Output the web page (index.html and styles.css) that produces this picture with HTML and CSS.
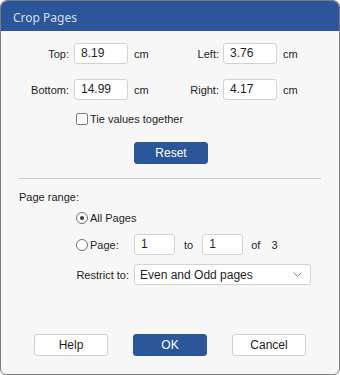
FILE: index.html
```html
<!DOCTYPE html>
<html>
<head>
<meta charset="utf-8">
<link rel="stylesheet" href="styles.css">
</head>
<body>
<div class="dialog">
  <div class="titlebar">Crop Pages</div>
  <div class="content">
    <div class="margins">
      <div class="lbl">Top:</div>
      <div class="field">8.19</div>
      <div class="unit">cm</div>
      <div class="lbl lbl2">Left:</div>
      <div class="field">3.76</div>
      <div class="unit">cm</div>
      <div class="lbl">Bottom:</div>
      <div class="field">14.99</div>
      <div class="unit">cm</div>
      <div class="lbl lbl2">Right:</div>
      <div class="field">4.17</div>
      <div class="unit">cm</div>
    </div>
    <div class="tie"><span class="check"></span><span>Tie values together</span></div>
    <div class="reset-row"><div class="btn primary">Reset</div></div>
    <div class="sep"></div>
    <div class="range-title">Page range:</div>
    <div class="opt-row all"><span class="radio checked"></span><span>All Pages</span></div>
    <div class="opt-row page-row">
      <div class="lead"><span class="radio"></span><span>Page:</span></div>
      <div class="field small">1</div>
      <span class="to">to</span>
      <div class="field small">1</div>
      <span class="of">of</span>
      <span class="total">3</span>
    </div>
    <div class="opt-row restrict-row">
      <div class="lead right">Restrict to:</div>
      <div class="select">
        <span>Even and Odd pages</span>
        <svg class="chev" width="9" height="5" viewBox="0 0 9 5"><polyline points="0.5,0.5 4.5,4.5 8.5,0.5" fill="none" stroke="#888" stroke-width="1"/></svg>
      </div>
    </div>
  </div>
  <div class="footer">
    <div class="btn">Help</div>
    <div class="btn primary">OK</div>
    <div class="btn">Cancel</div>
  </div>
</div>
</body>
</html>
```
FILE: styles.css
```css
html, body {
  margin: 0;
  padding: 0;
  background: #ffffff;
}
body {
  width: 340px;
  height: 375px;
  font-family: "Liberation Sans", Arial, sans-serif;
  font-size: 11px;
  color: #1e1e1e;
}
.dialog {
  box-sizing: border-box;
  width: 340px;
  height: 375px;
  border: 1px solid #7c7c7c;
  border-radius: 7px 7px 6px 6px;
  overflow: hidden;
  background: #f7f7f7;
  display: flex;
  flex-direction: column;
}
.titlebar {
  height: 30px;
  box-sizing: border-box;
  flex: none;
  background: #2b579a;
  color: #d6deeb;
  font-family: "Noto Sans", sans-serif;
  font-size: 12px;
  line-height: 26px;
  padding-top: 4px;
  padding-left: 12px;
}
.content {
  padding-top: 12px;
  display: flex;
  flex-direction: column;
}
.margins {
  display: grid;
  grid-template-columns: 65px 54px 34px 61px 54px auto;
  grid-auto-rows: 21px;
  row-gap: 15px;
  margin-left: 8px;
  align-items: center;
}
.lbl {
  text-align: right;
  padding-right: 5px;
}
.lbl2 {
  padding-right: 4px;
}
.unit {
  padding-left: 6px;
}
.field {
  box-sizing: border-box;
  height: 21px;
  background: #fff;
  border: 1px solid #d2d2d2;
  border-radius: 3px;
  padding-left: 6px;
  line-height: 19px;
  font-size: 12px;
}
.tie {
  margin-top: 12px;
  margin-left: 75px;
  height: 14px;
  display: flex;
  align-items: center;
  gap: 2px;
  font-size: 11px;
}
.check {
  box-sizing: border-box;
  width: 12px;
  height: 12px;
  border: 1px solid #7a7a7a;
  border-radius: 2px;
  background: #fff;
}
.reset-row {
  margin-top: 16px;
  margin-left: 133px;
}
.btn {
  box-sizing: border-box;
  width: 74px;
  height: 22px;
  border: 1px solid #cfcfcf;
  border-radius: 3px;
  background: #fff;
  text-align: center;
  line-height: 20px;
  font-size: 12px;
  color: #1e1e1e;
}
.btn.primary {
  background: #2b579a;
  border-color: #2b579a;
  color: #fff;
}
.sep {
  margin-top: 14px;
  margin-left: 18px;
  width: 302px;
  height: 1px;
  background: #c9c9c9;
}
.range-title {
  margin-top: 11px;
  margin-left: 18px;
  height: 14px;
  line-height: 14px;
}
.opt-row {
  display: flex;
  align-items: center;
  margin-left: 75px;
}
.opt-row.all {
  margin-top: 7px;
  height: 14px;
  gap: 2px;
}
.radio {
  box-sizing: border-box;
  width: 12px;
  height: 12px;
  border: 1px solid #707070;
  border-radius: 50%;
  background: #fff;
  display: inline-flex;
  align-items: center;
  justify-content: center;
}
.radio.checked::after {
  content: "";
  width: 4px;
  height: 4px;
  border-radius: 50%;
  background: #3a3a3a;
}
.page-row {
  margin-top: 9px;
  height: 21px;
}
.lead {
  width: 58px;
  display: flex;
  align-items: center;
  gap: 2px;
}
.lead.right {
  justify-content: flex-end;
  padding-right: 5px;
  box-sizing: border-box;
}
.field.small {
  width: 41px;
}
.to {
  margin-left: 9px;
  margin-right: 9px;
}
.of {
  margin-left: 8px;
}
.total {
  margin-left: 11px;
}
.restrict-row {
  margin-top: 9px;
  height: 21px;
}
.select {
  box-sizing: border-box;
  width: 177px;
  height: 21px;
  background: #fff;
  border: 1px solid #d2d2d2;
  border-radius: 3px;
  padding-left: 5px;
  padding-right: 8px;
  display: flex;
  align-items: center;
  justify-content: space-between;
  font-size: 12px;
}
.chev {
  display: block;
}
.footer {
  margin-top: auto;
  padding-bottom: 18px;
  padding-left: 33px;
  display: flex;
  gap: 25px;
}
```
